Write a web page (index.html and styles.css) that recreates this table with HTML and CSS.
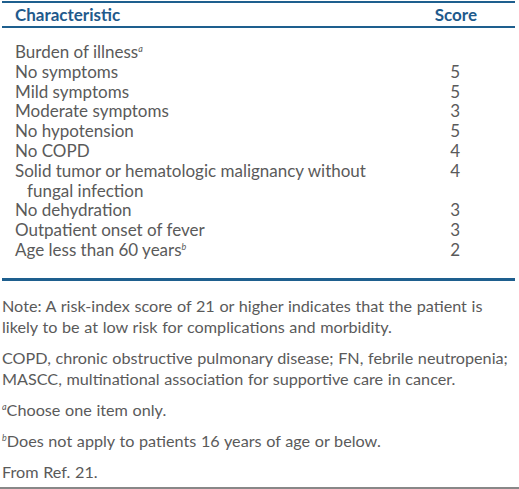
FILE: index.html
```html
<!DOCTYPE html>
<html lang="en">
<head>
    <meta charset="UTF-8">
    <title>MASCC risk-index score</title>
    <link rel="stylesheet" href="styles.css">
</head>
<body>
    <div class="wrap">
        <!-- Tableau du score -->
        <table class="score-table">
            <colgroup>
                <col class="c1">
                <col class="c2">
            </colgroup>
            <thead>
                <tr>
                    <th class="col-char">Characteristic</th>
                    <th class="col-score">Score</th>
                </tr>
            </thead>
            <tbody>
                <tr class="first"><td>Burden of illness<sup>a</sup></td><td></td></tr>
                <tr><td>No symptoms</td><td class="num">5</td></tr>
                <tr><td>Mild symptoms</td><td class="num">5</td></tr>
                <tr><td>Moderate symptoms</td><td class="num">3</td></tr>
                <tr><td>No hypotension</td><td class="num">5</td></tr>
                <tr><td>No COPD</td><td class="num">4</td></tr>
                <tr><td class="hang">Solid tumor or hematologic malignancy without fungal infection</td><td class="num">4</td></tr>
                <tr><td>No dehydration</td><td class="num">3</td></tr>
                <tr><td>Outpatient onset of fever</td><td class="num">3</td></tr>
                <tr class="last"><td>Age less than 60 years<sup>b</sup></td><td class="num">2</td></tr>
            </tbody>
        </table>

        <!-- Notes -->
        <div class="notes">
            <p>Note: A risk-index score of 21 or higher indicates that the patient is likely to be at low risk for complications and morbidity.</p>
            <p>COPD, chronic obstructive pulmonary disease; FN, febrile neutropenia; MASCC, multinational association for supportive care in cancer.</p>
            <p><sup>a</sup>Choose one item only.</p>
            <p><sup>b</sup>Does not apply to patients 16 years of age or below.</p>
            <p>From Ref. 21.</p>
        </div>
    </div>
    <div class="rule"></div>
</body>
</html>
```

FILE: styles.css
```css
body {
    margin: 0;
    font-family: Lato, "Open Sans", Arial, sans-serif;
    color: #5a5a5a;
    background: #fff;
}
.wrap {
    padding: 1px 2px 0 2px;
    height: 486px;
    overflow: hidden;
}
.score-table {
    width: 513px;
    table-layout: fixed;
    border-collapse: collapse;
    border-top: 2px solid #1e5f8e;
    border-bottom: 3px solid #1e5f8e;
    font-size: 17px;
}
.c1 {
    width: 398px;
}
.score-table th {
    color: #1f5a8c;
    font-size: 17px;
    font-weight: bold;
    padding: 2px 0 1px 0;
    line-height: 20px;
    border-bottom: 2px solid #1e5f8e;
}
.col-char {
    text-align: left;
    padding-left: 13px !important;
}
.col-score {
    text-align: right;
    padding-right: 38px !important;
}
.score-table td {
    padding: 0;
    line-height: 19.8px;
    vertical-align: top;
}
.score-table td:first-child {
    padding-left: 13px;
}
.score-table .num {
    text-align: right;
    padding-right: 55px;
}
.score-table tr.first td {
    padding-top: 14px;
}
.score-table tr.last td {
    padding-bottom: 18px;
}
.hang {
    padding-left: 25px !important;
    text-indent: -12px;
}
sup {
    font-size: 9px;
    font-style: italic;
    line-height: 0;
    vertical-align: 6px;
}
.notes {
    font-size: 16.2px;
    word-spacing: 0.5px;
    line-height: 21px;
    padding-top: 14px;
}
.notes p {
    margin: 0 0 10px 0;
}
.rule {
    height: 2px;
    background: #888;
}
```
